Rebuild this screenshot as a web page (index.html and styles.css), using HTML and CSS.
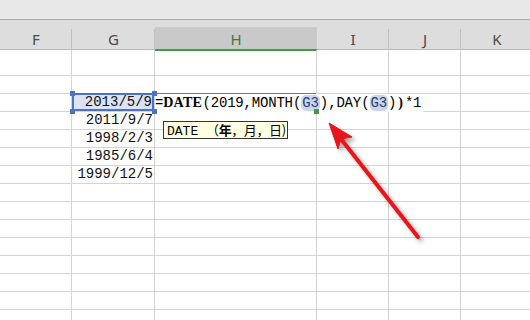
FILE: index.html
```html
<!DOCTYPE html>
<html lang="zh-CN">
<head>
    <meta charset="UTF-8">
    <meta name="viewport" content="width=device-width, initial-scale=1.0">
    <title>DATE</title>
    <link rel="stylesheet" href="styles.css">
</head>
<body>
    <div class="sheet">
        <div class="topbar"></div>
        <div class="head">
            <div class="hcell">F</div>
            <div class="hcell">G</div>
            <div class="hcell active">H</div>
            <div class="hcell">I</div>
            <div class="hcell">J</div>
            <div class="hcell">K</div>
        </div>
        <div class="grid">
            <div class="row tall"><div class="cell"></div><div class="cell"></div><div class="cell"></div><div class="cell"></div><div class="cell"></div><div class="cell"></div></div>
            <div class="row"><div class="cell"></div><div class="cell"></div><div class="cell"></div><div class="cell"></div><div class="cell"></div><div class="cell"></div></div>
            <div class="row">
                <div class="cell"></div>
                <div class="cell num selected">2013/5/9
                    <span class="handle tl"></span><span class="handle tr"></span>
                    <span class="handle bl"></span><span class="handle br"></span>
                </div>
                <div class="cell editing">
                    <span class="formula">=<b>DATE</b><i>(</i>2019,MONTH<i>(</i><span class="ref">G3</span><i>)</i>,DAY<i>(</i><span class="ref">G3</span><i>)</i><b class="paren">)</b>*1</span>
                    <span class="fill"></span>
                </div>
                <div class="cell"></div><div class="cell"></div><div class="cell"></div>
            </div>
            <div class="row"><div class="cell"></div><div class="cell num">2011/9/7</div><div class="cell"></div><div class="cell"></div><div class="cell"></div><div class="cell"></div></div>
            <div class="row"><div class="cell"></div><div class="cell num">1998/2/3</div><div class="cell"></div><div class="cell"></div><div class="cell"></div><div class="cell"></div></div>
            <div class="row"><div class="cell"></div><div class="cell num">1985/6/4</div><div class="cell"></div><div class="cell"></div><div class="cell"></div><div class="cell"></div></div>
            <div class="row"><div class="cell"></div><div class="cell num">1999/12/5</div><div class="cell"></div><div class="cell"></div><div class="cell"></div><div class="cell"></div></div>
            <div class="row"><div class="cell"></div><div class="cell"></div><div class="cell"></div><div class="cell"></div><div class="cell"></div><div class="cell"></div></div>
            <div class="row"><div class="cell"></div><div class="cell"></div><div class="cell"></div><div class="cell"></div><div class="cell"></div><div class="cell"></div></div>
            <div class="row"><div class="cell"></div><div class="cell"></div><div class="cell"></div><div class="cell"></div><div class="cell"></div><div class="cell"></div></div>
            <div class="row"><div class="cell"></div><div class="cell"></div><div class="cell"></div><div class="cell"></div><div class="cell"></div><div class="cell"></div></div>
            <div class="row"><div class="cell"></div><div class="cell"></div><div class="cell"></div><div class="cell"></div><div class="cell"></div><div class="cell"></div></div>
            <div class="row"><div class="cell"></div><div class="cell"></div><div class="cell"></div><div class="cell"></div><div class="cell"></div><div class="cell"></div></div>
            <div class="row"><div class="cell"></div><div class="cell"></div><div class="cell"></div><div class="cell"></div><div class="cell"></div><div class="cell"></div></div>
            <div class="row"><div class="cell"></div><div class="cell"></div><div class="cell"></div><div class="cell"></div><div class="cell"></div><div class="cell"></div></div>
        </div>

        <!-- function hint -->
        <div class="tip">DATE <span class="cjk">（<b>年</b>，月，日)</span></div>

        <!-- annotation arrow -->
        <svg class="arrow" width="530" height="320" viewBox="0 0 530 320">
            <defs>
                <filter id="shadow" x="-20%" y="-20%" width="140%" height="140%">
                    <feDropShadow dx="3" dy="3" stdDeviation="2" flood-color="#000" flood-opacity="0.35"/>
                </filter>
            </defs>
            <g filter="url(#shadow)" fill="#e8161c" stroke="#e8161c">
                <line x1="418" y1="237" x2="341" y2="139" stroke-width="4" stroke-linecap="round"/>
                <polygon points="329,123 352,137 341,139 338,149" stroke-width="1" stroke-linejoin="round"/>
            </g>
        </svg>
    </div>
</body>
</html>
```

FILE: styles.css
```css
* {
    box-sizing: border-box;
}
body {
    margin: 0;
    background: #fff;
}
.sheet {
    position: relative;
    width: 530px;
    height: 320px;
    overflow: hidden;
    font-family: "Liberation Mono", "DejaVu Sans Mono", monospace;
}
.topbar {
    height: 20px;
    background: #e8e8e8;
    border-bottom: 1px solid #a9a9a9;
}
.head {
    display: grid;
    grid-template-columns: 72px 83px 162px 72px 72px 72px;
    height: 30px;
    background: #dddddd;
    border-bottom: 1px solid #b9b9b9;
}
.hcell {
    padding-top: 9px;
    text-align: center;
    font-family: "Noto Sans", "DejaVu Sans", sans-serif;
    font-size: 15px;
    line-height: 20px;
    color: #4a4a4a;
    background-image: linear-gradient(#c0c0c0, #c0c0c0);
    background-size: 1px 21px;
    background-position: right bottom;
    background-repeat: no-repeat;
}
.hcell.active {
    background: linear-gradient(#dddddd 0 7px, #c9c9c9 7px);
    border-bottom: 2px solid #3f9c45;
    margin-bottom: -1px;
    color: #3b7a3f;
}
.grid {
    display: flex;
    flex-direction: column;
}
.row {
    display: grid;
    grid-template-columns: 72px 83px 162px 72px 72px 72px;
    height: 18px;
}
.row.tall {
    height: 26px;
}
.cell {
    position: relative;
    border-right: 1px solid #d4d4d4;
    border-bottom: 1px solid #d4d4d4;
    font-size: 14px;
    line-height: 17px;
    color: #111;
    white-space: nowrap;
}
.cell.num {
    text-align: right;
    padding-right: 1px;
}
.cell.selected {
    background: #dbe3f4;
    box-shadow: inset 0 0 0 2px #4f72c0;
    margin-top: -1px;
    height: 19px;
    padding-top: 1px;
    padding-right: 2px;
    z-index: 2;
}
.handle {
    position: absolute;
    width: 5px;
    height: 5px;
    background: #4f72c0;
}
.handle.tl { left: -2px; top: -2px; }
.handle.tr { right: -3px; top: -2px; }
.handle.bl { left: -2px; bottom: -3px; }
.handle.br { right: -3px; bottom: -3px; }
.cell.editing {
    box-shadow: inset 0 2px 0 #3f9c45, inset 0 -2px 0 #3f9c45;
    margin-top: -1px;
    height: 19px;
    padding-top: 1px;
    z-index: 1;
}
.formula {
    display: inline-block;
    background: #fff;
    color: #000;
    padding-right: 2px;
    letter-spacing: -0.2px;
}
.formula b {
    font-family: "Liberation Serif", serif;
    font-weight: bold;
    font-size: 14px;
    letter-spacing: 0.3px;
}
.formula i {
    font-style: normal;
    display: inline-block;
    width: 8.5px;
    text-align: center;
}
.formula b.paren {
    display: inline-block;
    width: 8.5px;
    text-align: center;
}
.ref {
    background: #c9d5ee;
    border-radius: 5px;
    padding: 0 1px;
    color: #2b3f6e;
}
.fill {
    position: absolute;
    right: -3px;
    bottom: -3px;
    width: 5px;
    height: 5px;
    background: #3f9c45;
}
.tip {
    position: absolute;
    left: 163px;
    top: 121px;
    height: 18px;
    padding: 0 1px 0 3px;
    white-space: nowrap;
    background: #ffffe1;
    border: 1px solid #333;
    font-size: 13px;
    line-height: 16px;
    color: #000;
    z-index: 3;
}
.tip .cjk {
    font-family: "Noto Sans CJK SC", sans-serif;
    font-size: 13px;
    letter-spacing: -0.4px;
}
.arrow {
    position: absolute;
    left: 0;
    top: 0;
    pointer-events: none;
    z-index: 4;
}
```
